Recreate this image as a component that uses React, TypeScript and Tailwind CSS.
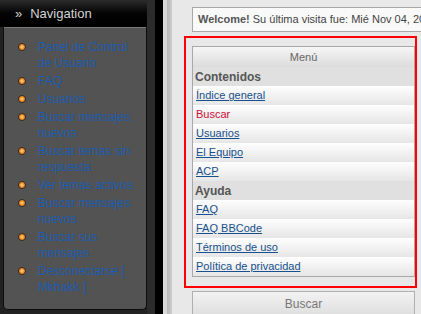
const navItems = [
  "Panel de Control de Usuario",
  "FAQ",
  "Usuarios",
  "Buscar mensajes nuevos",
  "Buscar temas sin respuesta",
  "Ver temas activos",
  "Buscar mensajes nuevos",
  "Buscar sus mensajes",
  "Desconectarse [ Mkhakk ]",
];

type Row = { label: string; kind: "cat" | "link" | "active" };

const menuRows: Row[] = [
  { label: "Contenidos", kind: "cat" },
  { label: "Índice general", kind: "link" },
  { label: "Buscar", kind: "active" },
  { label: "Usuarios", kind: "link" },
  { label: "El Equipo", kind: "link" },
  { label: "ACP", kind: "link" },
  { label: "Ayuda", kind: "cat" },
  { label: "FAQ", kind: "link" },
  { label: "FAQ BBCode", kind: "link" },
  { label: "Términos de uso", kind: "link" },
  { label: "Política de privacidad", kind: "link" },
];

function Bullet() {
  return (
    <span className="mt-[4px] h-[8px] w-[8px] shrink-0 rounded-full border border-[#3a2a1a] bg-[radial-gradient(circle_at_50%_50%,#ffe4b0_0%,#f89a30_40%,#e8761a_100%)]" />
  );
}

export default function App() {
  return (
    <div className="flex h-[314px] w-[421px] overflow-hidden font-['Liberation_Sans',Arial,sans-serif]">
      {/* Left navigation column */}
      <div className="flex w-[147px] shrink-0 flex-col bg-[#222]">
        <div className="flex h-[27px] shrink-0 items-center bg-gradient-to-b from-[#2c2c2c] via-[#050505] to-black pl-[15px] text-[13px] text-[#d4d4d4]">
          <span className="mr-[8px]">»</span>
          <span>Navigation</span>
        </div>
        <div className="ml-[3px] h-[283px] w-[144px] rounded-b-[5px] border border-t-0 border-[#0c0c0c] bg-[#535353] shadow-[inset_0_1px_0_#777]">
          <ul className="pl-[14px] pt-[12px]">
            {navItems.map((item, i) => (
              <li key={i} className="mb-[2px] flex gap-[12px]">
                <Bullet />
                <span className="w-[100px] text-[12px] leading-[16px] text-[#1c5cb0]">{item}</span>
              </li>
            ))}
          </ul>
        </div>
      </div>

      {/* Divider stripes */}
      <div className="w-[8px] shrink-0 bg-[#2b2b2b]" />
      <div className="w-[8px] shrink-0 bg-black" />
      <div className="w-[4px] shrink-0 bg-[#dadada]" />
      <div className="w-[5px] shrink-0 bg-gradient-to-r from-[#b8b8b8] to-[#cfcfcf]" />

      {/* Main content */}
      <div className="min-w-0 flex-1 overflow-hidden bg-[#e8e8e8] pl-[12px] pr-[4px] pt-[7px]">
        <div className="ml-[8px] flex h-[25px] w-[270px] items-center whitespace-nowrap border border-[#a8a8a8] bg-[#f9f9f9] pl-[5px] text-[11px] text-[#444]">
          <b className="mr-[3px] text-[#555]">Welcome!</b>
          Su última visita fue: Mié Nov 04, 2009 8:12 pm
        </div>

        <div className="mt-[4px] w-[233px] border-2 border-[#ff0000] pb-[9px] pl-[6px] pt-[8px]">
          <div className="border border-[#a8a8a8] bg-[#f2f2f2]">
            <div className="flex h-[20px] items-center justify-center bg-gradient-to-b from-[#f6f6f6] to-[#dcdcdc] text-[11px] text-[#666]">
              Menú
            </div>
            {menuRows.map((row, i) =>
              row.kind === "cat" ? (
                <div
                  key={i}
                  className="flex h-[19px] items-center bg-[#e0e0e0] pl-[2px] text-[12px] font-bold text-[#555]"
                >
                  {row.label}
                </div>
              ) : (
                <div
                  key={i}
                  className="flex h-[19px] items-center bg-gradient-to-b from-[#fefefe] to-[#e6e6e6] pl-[3px] text-[11px]"
                >
                  {row.kind === "active" ? (
                    <span className="text-[#cc0f3a]">{row.label}</span>
                  ) : (
                    <span className="text-[#17508c] underline">{row.label}</span>
                  )}
                </div>
              )
            )}
          </div>
        </div>

        <div className="ml-[8px] mt-[3px] flex h-[26px] w-[223px] items-start justify-center border border-[#b0b0b0] bg-gradient-to-b from-[#f2f2f2] to-[#dedede] pt-[3px] text-[12px] text-[#777]">
          Buscar
        </div>
      </div>
    </div>
  );
}
